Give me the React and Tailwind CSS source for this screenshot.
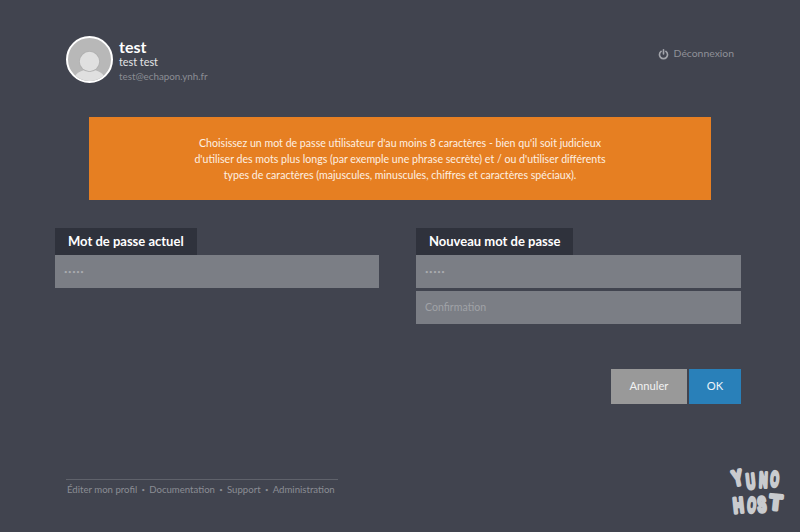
const font = { fontFamily: 'Lato, "Noto Sans", sans-serif' };

function Avatar() {
  return (
    <div className="w-[47px] h-[47px] rounded-full border-2 border-white bg-[#b8b8b8] overflow-hidden shrink-0">
      <svg viewBox="0 0 43 43" className="w-full h-full block">
        <ellipse cx="21.5" cy="42" rx="15.5" ry="10.5" fill="#e0e0e0" />
        <circle cx="21.5" cy="23.5" r="10.5" fill="#b0b0b0" />
        <circle cx="21.5" cy="23.5" r="9.7" fill="#e0e0e0" />
      </svg>
    </div>
  );
}

function Power() {
  return (
    <svg viewBox="0 0 12 12" className="w-[11px] h-[11px]" fill="none" stroke="#a3a5ab" strokeWidth="1.8" strokeLinecap="round">
      <path d="M3.4 2.6a4.4 4.4 0 1 0 5.2 0" />
      <path d="M6 .9v4.6" />
    </svg>
  );
}

function Logo() {
  const letters = [
    ["Y", 2, 19, -12, 0.72], ["U", 15, 22, -6, 0.58], ["N", 27, 20, 2, 0.55], ["O", 38, 19, 4, 0.52],
    ["H", 2, 46, -6, 0.68], ["O", 15, 45, 4, 0.52], ["S", 26, 45, -4, 0.62], ["T", 37, 42, 6, 0.95],
  ];
  return (
    <svg viewBox="0 0 56 50" className="absolute left-[732px] top-[467px] w-[56px] h-[50px] overflow-visible">
      {letters.map(([c, x, y, r, s], i) => (
        <text key={i} transform={`translate(${x} ${y}) rotate(${r}) scale(${s} 1)`} fontFamily="Liberation Sans" fontWeight="700" fontSize="21" fill="#c9cbce" stroke="#c9cbce" strokeWidth="3.6" strokeLinejoin="round">{c}</text>
      ))}
    </svg>
  );
}

function Field({ value, placeholder }) {
  return (
    <div className={`h-[33px] bg-[#7b7e85] pl-[9px] flex items-center text-[10.6px] ${value ? "text-[#a9abaf]" : "text-[#a0a2a7]"}`}>
      {value ? <span className="text-[6px] tracking-[0.6px] leading-none">•••••</span> : placeholder}
    </div>
  );
}

function Label({ children }) {
  return (
    <div className="h-[27px] self-start bg-[#2f323c] px-[13px] flex items-center text-[13px] font-bold text-white whitespace-nowrap">
      {children}
    </div>
  );
}

function Dot() {
  return <span className="mx-[4.3px] text-[6px] leading-none">•</span>;
}

export default function App() {
  return (
    <div style={font} className="relative w-[800px] h-[532px] overflow-hidden bg-[#41444f] text-white">
      <header className="flex justify-between pt-[36px] pl-[66px] pr-[66px]">
        <div className="flex gap-[6px] h-[47px]">
          <Avatar />
          <div className="flex flex-col">
            <span className="text-[16px] font-bold leading-[22px]">test</span>
            <span className="text-[10.8px] leading-[15px] -mt-[4px] text-[#e4e4e6]">test test</span>
            <span className="text-[9.8px] leading-[13px] mt-px text-[#8b8d94]">test@echapon.ynh.fr</span>
          </div>
        </div>
        <div className="flex items-center gap-[5px] h-[36px] text-[#8f9198] text-[10.4px]">
          <Power />
          <span>Déconnexion</span>
        </div>
      </header>

      <div className="mx-[89px] mt-[34px] h-[83px] bg-[#e67f22] flex items-center justify-center text-center text-[10.6px] leading-[16px] text-[#fdf0e2]">
        <p>
          Choisissez un mot de passe utilisateur d'au moins 8 caractères - bien qu'il soit judicieux<br />
          d'utiliser des mots plus longs (par exemple une phrase secrète) et / ou d'utiliser différents<br />
          types de caractères (majuscules, minuscules, chiffres et caractères spéciaux).
        </p>
      </div>

      <div className="flex justify-between pl-[55px] pr-[59px] mt-[28px]">
        <div className="w-[324px] flex flex-col">
          <Label>Mot de passe actuel</Label>
          <Field value />
        </div>
        <div className="w-[325px] flex flex-col gap-0">
          <Label>Nouveau mot de passe</Label>
          <Field value />
          <div className="mt-[3px]">
            <Field placeholder="Confirmation" />
          </div>
        </div>
      </div>

      <div className="flex justify-end gap-[2px] pr-[59px] mt-[45px]">
        <div className="w-[76px] h-[35px] bg-[#999999] flex items-center justify-center text-[11.2px] text-[#f2f2f2]">Annuler</div>
        <div className="w-[52px] h-[35px] bg-[#2980b9] flex items-center justify-center text-[11.2px] text-[#eef5fa]">OK</div>
      </div>

      <footer className="ml-[66px] w-[272px] mt-[75px] border-t border-[#5f626b] pt-[3px] pl-px flex items-center whitespace-nowrap text-[9.6px] leading-[14px] text-[#8b8d94]">
        <span>Éditer mon profil</span>
        <Dot />
        <span>Documentation</span>
        <Dot />
        <span>Support</span>
        <Dot />
        <span>Administration</span>
      </footer>

      <Logo />
    </div>
  );
}
